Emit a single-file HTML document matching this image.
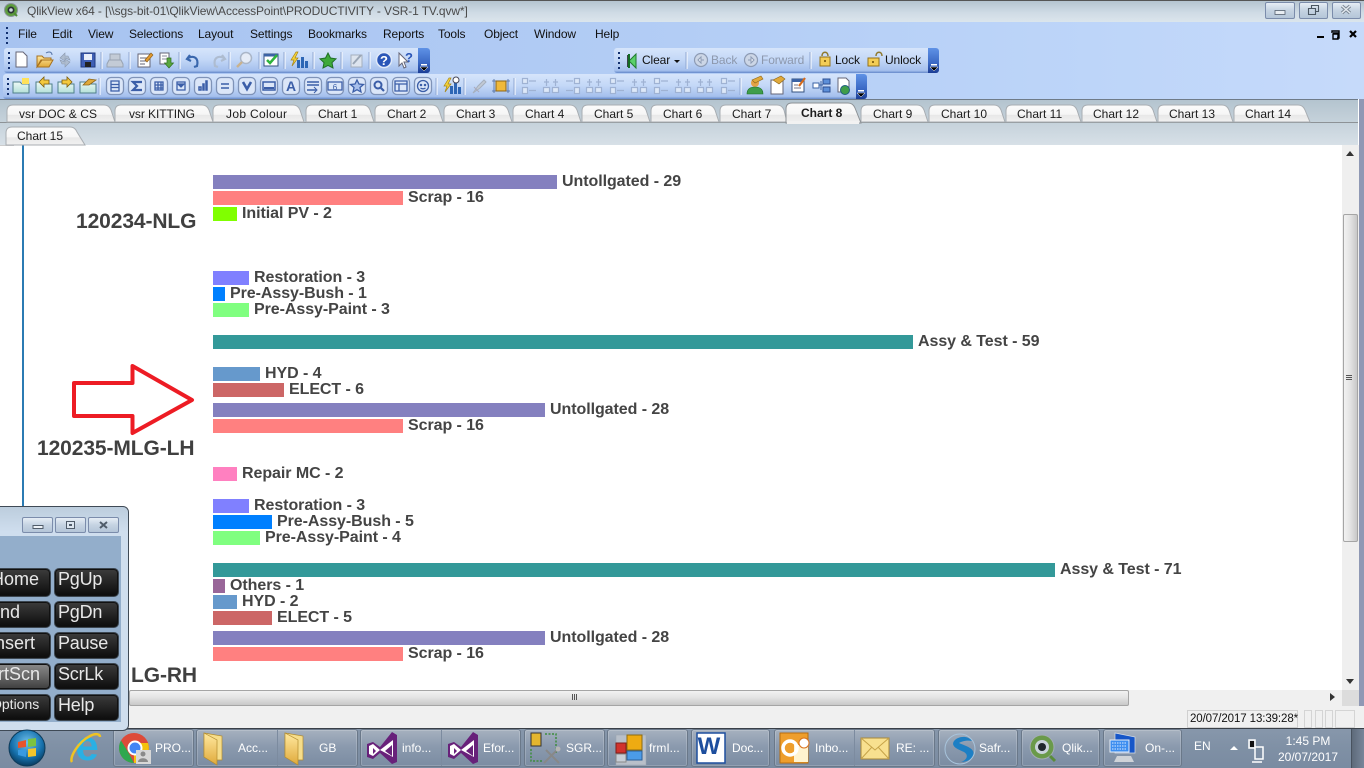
<!DOCTYPE html>
<html><head><meta charset="utf-8"><style>
html,body{margin:0;padding:0}
body{width:1364px;height:768px;position:relative;overflow:hidden;background:#fff;font-family:"Liberation Sans",sans-serif}
div,span.t{position:absolute;white-space:nowrap}
.m{top:27px;font-size:12px;color:#111;line-height:14px;letter-spacing:-.12px}
.tb{border-radius:3px;background:linear-gradient(#d6e5fb,#c4d8f7 45%,#a5c0ed 90%,#6488ca);}
.ch{background:linear-gradient(#5f92e6,#3a68c4 60%,#1b3d95);border-radius:0 3px 3px 0}
.b{height:14px;left:213px}
.l{font-size:16px;font-weight:bold;color:#444;line-height:16px;letter-spacing:-.06px}
.h{font-size:21px;font-weight:bold;color:#404040;line-height:24px;letter-spacing:-.1px}
.k{background:linear-gradient(#3c3c3c,#262626 45%,#0c0c0c);border:1px solid #3c4650;border-radius:5px;box-shadow:inset 0 0 0 1px #111;color:#e8e8e8;font-size:18px;line-height:20px;height:27px;box-sizing:border-box}
.r{left:54px;width:65px;padding-left:3px;letter-spacing:-.2px}
.c{left:-30px;width:81px}
.w{border:1px solid #7b8cab;border-radius:2px;background:linear-gradient(#e6edf5,#c5d3e2 50%,#b4c5d8);box-sizing:border-box}
.tk{top:729px;height:38px;box-sizing:border-box;border:1px solid #6a7889;border-radius:3px;background:linear-gradient(#a6b1bf,#8b9aae 45%,#7b8ca2);box-shadow:inset 0 0 0 1px rgba(255,255,255,.18)}
.tt{font-size:12px;color:#fff;line-height:14px;top:741px}
</style></head><body>
<!-- title -->
<div style="left:0;top:0;width:1364px;height:22px;background:linear-gradient(#b5c4d0 0,#cfdbe5 55%,#dbe5ec);border-top:1px solid #555;box-sizing:border-box"></div>
<div style="left:27px;top:4px;font-size:12px;color:#4a4a4a;line-height:14px;letter-spacing:-.12px">QlikView x64 - [\\sgs-bit-01\QlikView\AccessPoint\PRODUCTIVITY - VSR-1 TV.qvw*]</div>
<div class="w" style="left:1265px;top:2px;width:30px;height:17px"></div>
<div class="w" style="left:1299px;top:2px;width:29px;height:17px"></div>
<div class="w" style="left:1332px;top:2px;width:29px;height:17px"></div>
<!-- menu band -->
<div style="left:0;top:22px;width:1364px;height:77px;background:linear-gradient(90deg,#a7c3f0,#b3cdf5 50%,#bdd5f9 80%,#c6dafa)"></div>
<div class="m" style="left:18px">File</div><div class="m" style="left:52px">Edit</div><div class="m" style="left:88px">View</div><div class="m" style="left:129px">Selections</div><div class="m" style="left:198px">Layout</div><div class="m" style="left:250px">Settings</div><div class="m" style="left:308px">Bookmarks</div><div class="m" style="left:383px">Reports</div><div class="m" style="left:438px">Tools</div><div class="m" style="left:484px">Object</div><div class="m" style="left:534px">Window</div><div class="m" style="left:595px">Help</div>
<!-- toolbars -->
<div class="tb" style="left:4px;top:48px;width:426px;height:25px"></div>
<div class="ch" style="left:418px;top:48px;width:12px;height:25px"></div>
<div class="tb" style="left:3px;top:74px;width:864px;height:25px"></div>
<div class="ch" style="left:856px;top:74px;width:11px;height:25px"></div>
<div class="tb" style="left:614px;top:48px;width:325px;height:25px"></div>
<div class="ch" style="left:928px;top:48px;width:11px;height:25px"></div>
<div class="m" style="left:642px;top:53px;color:#111">Clear</div>
<div class="m" style="left:711px;top:53px;color:#8d98ad">Back</div>
<div class="m" style="left:761px;top:53px;color:#8d98ad">Forward</div>
<div class="m" style="left:835px;top:53px">Lock</div>
<div class="m" style="left:885px;top:53px">Unlock</div>
<!-- tab strip -->
<div style="left:0;top:99px;width:1358px;height:46px;background:linear-gradient(#b4c4cf,#d7e0e7);border-top:1px solid #6f7b88;box-sizing:border-box"></div>
<div style="left:0;top:122px;width:1358px;height:1px;background:#8d9296"></div>
<div style="left:1358px;top:99px;width:6px;height:46px;background:#fff"></div>
<!-- content -->
<div style="left:0;top:145px;width:1342px;height:545px;background:#fff"></div>
<div style="left:22px;top:145px;width:2px;height:362px;background:#2b7bb3"></div>
<div style="left:0;top:145px;width:14px;height:1px;background:#ccc"></div>
<div style="left:1359px;top:99px;width:5px;height:610px;background:#8f98b4"></div>
<!-- bars -->
<div class="b" style="top:175px;width:344px;background:#8480bf"></div><div class="l" style="left:562px;top:174px">Untollgated - 29</div>
<div class="b" style="top:191px;width:190px;background:#ff8080"></div><div class="l" style="left:408px;top:190px">Scrap - 16</div>
<div class="b" style="top:207px;width:24px;background:#80ff00"></div><div class="l" style="left:242px;top:206px">Initial PV - 2</div>
<div class="b" style="top:271px;width:36px;background:#8080ff"></div><div class="l" style="left:254px;top:270px">Restoration - 3</div>
<div class="b" style="top:287px;width:12px;background:#0080ff"></div><div class="l" style="left:230px;top:286px">Pre-Assy-Bush - 1</div>
<div class="b" style="top:303px;width:36px;background:#80ff80"></div><div class="l" style="left:254px;top:302px">Pre-Assy-Paint - 3</div>
<div class="b" style="top:335px;width:700px;background:#339999"></div><div class="l" style="left:918px;top:334px">Assy &amp; Test - 59</div>
<div class="b" style="top:367px;width:47px;background:#6699cc"></div><div class="l" style="left:265px;top:366px">HYD - 4</div>
<div class="b" style="top:383px;width:71px;background:#cc6666"></div><div class="l" style="left:289px;top:382px">ELECT - 6</div>
<div class="b" style="top:403px;width:332px;background:#8480bf"></div><div class="l" style="left:550px;top:402px">Untollgated - 28</div>
<div class="b" style="top:419px;width:190px;background:#ff8080"></div><div class="l" style="left:408px;top:418px">Scrap - 16</div>
<div class="b" style="top:467px;width:24px;background:#ff80c0"></div><div class="l" style="left:242px;top:466px">Repair MC - 2</div>
<div class="b" style="top:499px;width:36px;background:#8080ff"></div><div class="l" style="left:254px;top:498px">Restoration - 3</div>
<div class="b" style="top:515px;width:59px;background:#0080ff"></div><div class="l" style="left:277px;top:514px">Pre-Assy-Bush - 5</div>
<div class="b" style="top:531px;width:47px;background:#80ff80"></div><div class="l" style="left:265px;top:530px">Pre-Assy-Paint - 4</div>
<div class="b" style="top:563px;width:842px;background:#339999"></div><div class="l" style="left:1060px;top:562px">Assy &amp; Test - 71</div>
<div class="b" style="top:579px;width:12px;background:#996699"></div><div class="l" style="left:230px;top:578px">Others - 1</div>
<div class="b" style="top:595px;width:24px;background:#6699cc"></div><div class="l" style="left:242px;top:594px">HYD - 2</div>
<div class="b" style="top:611px;width:59px;background:#cc6666"></div><div class="l" style="left:277px;top:610px">ELECT - 5</div>
<div class="b" style="top:631px;width:332px;background:#8480bf"></div><div class="l" style="left:550px;top:630px">Untollgated - 28</div>
<div class="b" style="top:647px;width:190px;background:#ff8080"></div><div class="l" style="left:408px;top:646px">Scrap - 16</div>
<div class="h" style="left:76px;top:210px">120234-NLG</div>
<div class="h" style="left:37px;top:437px">120235-MLG-LH</div>
<div class="h" style="left:131px;top:664px">LG-RH</div>
<!-- scrollbars -->
<div style="left:1342px;top:145px;width:17px;height:561px;background:#efefef"></div>
<div style="left:1343px;top:214px;width:15px;height:328px;box-sizing:border-box;border:1px solid #a5a5a5;border-radius:2px;background:linear-gradient(90deg,#f2f2f2,#e4e4e4 45%,#c8c8c8)"></div>
<div style="left:129px;top:690px;width:1213px;height:16px;background:#f0f0f0"></div>
<div style="left:129px;top:690px;width:1000px;height:16px;box-sizing:border-box;border:1px solid #a5a5a5;border-radius:2px;background:linear-gradient(#f2f2f2,#e4e4e4 45%,#c8c8c8)"></div>
<div style="left:1342px;top:690px;width:17px;height:16px;background:#dcdcdc"></div>
<!-- status -->
<div style="left:0;top:706px;width:1364px;height:22px;background:#f0f0f0"></div>
<div style="left:1187px;top:710px;width:111px;height:18px;box-sizing:border-box;border:1px solid #d0d0d0;font-size:11.5px;line-height:17px;color:#111;padding-left:2px;letter-spacing:-.1px">20/07/2017 13:39:28*</div>
<div style="left:1304px;top:710px;width:8px;height:18px;border:1px solid #d4d4d4;box-sizing:border-box"></div>
<div style="left:1315px;top:710px;width:8px;height:18px;border:1px solid #d4d4d4;box-sizing:border-box"></div>
<div style="left:1325px;top:710px;width:8px;height:18px;border:1px solid #d4d4d4;box-sizing:border-box"></div>
<div style="left:1335px;top:710px;width:20px;height:18px;border:1px solid #d4d4d4;box-sizing:border-box"></div>
<!-- taskbar -->
<div style="left:0;top:728px;width:1364px;height:40px;background:linear-gradient(#8797ab,#7f90a5 50%,#7a8ba1);border-top:1px solid #3a4048;box-sizing:border-box"></div>
<div class="tk" style="left:113px;width:81px"></div>
<div class="tk" style="left:196px;width:162px"></div><div style="left:277px;top:730px;width:1px;height:36px;background:#7c8b9f"></div>
<div class="tk" style="left:360px;width:161px"></div><div style="left:441px;top:730px;width:1px;height:36px;background:#7c8b9f"></div>
<div class="tk" style="left:524px;width:81px"></div>
<div class="tk" style="left:607px;width:81px"></div>
<div class="tk" style="left:691px;width:79px"></div>
<div class="tk" style="left:774px;width:161px"></div><div style="left:854px;top:730px;width:1px;height:36px;background:#7c8b9f"></div>
<div class="tk" style="left:938px;width:80px"></div>
<div class="tk" style="left:1021px;width:79px"></div>
<div class="tk" style="left:1103px;width:79px"></div>
<div style="left:1351px;top:729px;width:13px;height:39px;background:linear-gradient(90deg,#5e6a7a,#77869a);border-left:1px solid #48525f;box-sizing:border-box"></div>
<div class="tt" style="left:155px">PRO...</div><div class="tt" style="left:238px">Acc...</div><div class="tt" style="left:319px">GB</div><div class="tt" style="left:402px">info...</div><div class="tt" style="left:483px">Efor...</div><div class="tt" style="left:566px">SGR...</div><div class="tt" style="left:649px">frmI...</div><div class="tt" style="left:732px">Doc...</div><div class="tt" style="left:815px">Inbo...</div><div class="tt" style="left:896px">RE: ...</div><div class="tt" style="left:979px">Safr...</div><div class="tt" style="left:1062px">Qlik...</div><div class="tt" style="left:1145px">On-...</div>
<div class="tt" style="left:1194px;top:739px">EN</div>
<div class="tt" style="left:1268px;width:80px;text-align:center;top:734px">1:45 PM</div>
<div class="tt" style="left:1268px;width:80px;text-align:center;top:750px">20/07/2017</div>
<!-- on-screen keyboard window -->
<div style="left:-6px;top:506px;width:135px;height:225px;box-sizing:border-box;border:1px solid #3f4a56;border-radius:6px;background:linear-gradient(#bccddd,#cfdeee 25px)"></div>
<div style="left:0;top:536px;width:121px;height:186px;background:#93aecb"></div>
<div class="w" style="left:22px;top:517px;width:31px;height:16px"></div>
<div class="w" style="left:55px;top:517px;width:31px;height:16px"></div>
<div class="w" style="left:88px;top:517px;width:31px;height:16px"></div>
<div class="k c" style="top:568px;height:29px;padding-left:20px;line-height:21px">Home</div>
<div class="k c" style="top:601px;padding-left:17px">End</div>
<div class="k c" style="top:632px;padding-left:19px">Insert</div>
<div class="k c" style="top:663px;padding-left:15px;background:linear-gradient(#8a8a8a,#666 50%,#3e3e3e)">PrtScn</div>
<div class="k c" style="top:694px;padding-left:20px;font-size:14px;line-height:18px">Options</div>
<div class="k r" style="top:568px;height:29px;line-height:21px">PgUp</div>
<div class="k r" style="top:601px">PgDn</div>
<div class="k r" style="top:632px">Pause</div>
<div class="k r" style="top:663px">ScrLk</div>
<div class="k r" style="top:694px">Help</div>

<svg width="1364" height="768" viewBox="0 0 1364 768" style="position:absolute;left:0;top:0" xmlns="http://www.w3.org/2000/svg">
<defs>
<linearGradient id="tg" x1="0" y1="0" x2="0" y2="1"><stop offset="0" stop-color="#fbfbfb"/><stop offset=".55" stop-color="#f6f6f6"/><stop offset=".6" stop-color="#e8e8e8"/><stop offset="1" stop-color="#f1f1f1"/></linearGradient>
<linearGradient id="gy" x1="0" y1="0" x2="0" y2="1"><stop offset="0" stop-color="#ffe9a0"/><stop offset="1" stop-color="#e0a93a"/></linearGradient>
<linearGradient id="tl" x1="0" y1="0" x2="0" y2="1"><stop offset="0" stop-color="#eef9f6"/><stop offset="1" stop-color="#b4e0d8"/></linearGradient>
<radialGradient id="orb" cx=".5" cy=".35" r=".7"><stop offset="0" stop-color="#6fc0ea"/><stop offset=".6" stop-color="#1671ad"/><stop offset="1" stop-color="#06304f"/></radialGradient>
<g id="btn"><rect x="-8.5" y="-8.5" width="17" height="17" rx="4.5" fill="#dbe6f8" stroke="#7f93b8"/></g>
<g id="dots"><rect x="0" y="0" width="2" height="2" fill="#12306f"/><rect x="0" y="5" width="2" height="2" fill="#12306f"/><rect x="0" y="10" width="2" height="2" fill="#12306f"/><rect x="0" y="15" width="2" height="2" fill="#12306f"/></g>
<g id="chev"><rect x="-3" y="0" width="6" height="1.5" fill="#fff"/><path d="M-4 3H4L0 7Z" fill="#000" stroke="#fff" stroke-width=".5"/></g>
<g id="tabf"><path d="M-8 9V-2H-1L1 0H8V9Z" fill="url(#tl)" stroke="#4f7f8a"/></g>
<g id="al" fill="none" stroke="#9fb2d3" stroke-width="1.2"><rect x="-6.5" y="-7.5" width="5" height="5" fill="#dde8f8"/><rect x="-6.5" y="1.500" width="5" height="6" fill="#dde8f8"/><path d="M0-5H7M0 4.500H7"/></g>
<g id="av" fill="none" stroke="#9fb2d3" stroke-width="1.2"><rect x="-7.500" y="1.500" width="6" height="5" fill="#dde8f8"/><rect x="1.500" y="1.500" width="6" height="5" fill="#dde8f8"/><path d="M-4.500-7V0M4.500-7V0M-7-4H-2M2-4H7"/></g>
</defs>
<!-- menu grip -->
<use href="#dots" x="6" y="27"/>
<!-- window controls -->
<rect x="1275" y="10.500" width="10" height="4" fill="#e8edf2" stroke="#54606e" stroke-width=".8"/>
<path d="M1311.500 8.500v-3h7v6h-3M1308.500 8.500h7v6h-7Z" fill="none" stroke="#4a5662" stroke-width="1.100"/>
<path d="M1342 6l8 7M1350 6l-8 7" stroke="#7c8895" stroke-width="3.400"/><path d="M1342 6l8 7M1350 6l-8 7" stroke="#e4eaf0" stroke-width="1.400"/>
<rect x="1317" y="36" width="7" height="2" fill="#000"/>
<path d="M1333 33h6v5h-2M1332 33v-2h7v2M1333 34h5v5h-5Z" fill="none" stroke="#000" stroke-width="1.400"/>
<path d="M1350 31l6 6M1356 31l-6 6" stroke="#000" stroke-width="2.200"/>
<!-- toolbar grips -->
<use href="#dots" x="8" y="52"/><use href="#dots" x="7" y="78"/><use href="#dots" x="618" y="52"/>
<use href="#chev" x="424" y="64"/><use href="#chev" x="861" y="90"/><use href="#chev" x="934" y="64"/>
<!-- separators -->
<path d="M102 52v17M130 52v17M180 52v17M230 52v17M260 52v17M285 52v17M314 52v17M342 52v17M370 52v17M100 78v17M437 78v17M465 78v17M515 78v17M741 78v17M687 52v17M811 52v17" stroke="#f4f8ff" stroke-width="1.400" opacity=".9"/>
<path d="M101 52v17M129 52v17M179 52v17M229 52v17M259 52v17M284 52v17M313 52v17M341 52v17M369 52v17M99 78v17M436 78v17M464 78v17M514 78v17M740 78v17M686 52v17M810 52v17" stroke="#8fa7d3" stroke-width="1"/>
<!-- toolbar 1 -->
<path d="M16 52h7l4 4v11H16Z" fill="#fff" stroke="#667"/>
<path d="M37 56h5l2 2h7v2h-9l-5 7Zm0 11 4-7h12l-4 7Z" fill="url(#gy)" stroke="#a6701e"/><path d="M46 53c3-2 6-1 6 2" fill="none" stroke="#5574a8"/>
<path d="M60 58l5-5v3h3l2 4-5-2v3ZM70 62l-5 5v-3h-3l-2-4 5 2v-3Z" fill="#aebccf" stroke="#8b99ae" stroke-width=".6"/>
<rect x="81" y="53" width="14" height="14" fill="#3f5fb4" stroke="#203a80"/><rect x="84" y="54" width="8" height="6" fill="#e8eefa"/><rect x="85" y="62" width="6" height="5" fill="#222"/>
<path d="M109 60h12l2 4v3h-16v-3ZM110 60v-6h10v6" fill="#c3cbd6" stroke="#98a3b2"/>
<rect x="138" y="54" width="12" height="13" fill="#fff" stroke="#667"/><path d="M140 58h7M140 61h7M140 64h5" stroke="#667"/><path d="M145 60l6-7 2 2-6 7Z" fill="#e39a2f" stroke="#8b5c15" stroke-width=".6"/>
<path d="M160 53h9v11h-9Z" fill="#fff" stroke="#667"/><path d="M162 56h5M162 59h5" stroke="#889"/><path d="M167 58h4v5h2.500l-4.500 5-4.500-5h2.500Z" fill="#5aa83f" stroke="#2f6e1f" stroke-width=".7"/>
<path d="M190 55l-3 4 4 2M188 58c6-3 11 0 9 8l-3 1" fill="none" stroke="#3a67ad" stroke-width="2.200"/>
<path d="M222 55l3 4-4 2M224 58c-6-3-11 0-9 8l3 1" fill="none" stroke="#aebcd0" stroke-width="2.200"/>
<circle cx="246" cy="58" r="5.500" fill="#e6ecf6" stroke="#aab6c8" stroke-width="1.500"/><path d="M242 62l-5 5" stroke="#c9b28f" stroke-width="2.500"/>
<rect x="264" y="54" width="14" height="12" fill="#fff" stroke="#34527f"/><rect x="264" y="54" width="14" height="2.500" fill="#3b63a5"/><path d="M267 60l3 3 7-8" fill="none" stroke="#2fb33c" stroke-width="2.500"/>
<path d="M296 52l-5 8h3l-2 6 6-8h-3l3-6Z" fill="#f5d33d" stroke="#a78514" stroke-width=".7"/><rect x="297" y="60" width="3" height="8" fill="#2d66b5"/><rect x="301" y="57" width="3" height="11" fill="#2d66b5"/><rect x="305" y="61" width="3" height="7" fill="#2d66b5"/>
<path d="M328 53l2.500 5 5.500.8-4 3.900 1 5.300-5-2.600-5 2.600 1-5.300-4-3.900 5.500-.8Z" fill="#3ea93a" stroke="#1f6f26"/>
<rect x="351" y="55" width="11" height="12" fill="#dde4ee" stroke="#a5afbd"/><path d="M353 64l8-9" stroke="#9aa6b6" stroke-width="2"/>
<circle cx="384" cy="60" r="7.500" fill="#2a56b8" stroke="#dfe8f8" stroke-width="1.500"/><text x="384" y="65" font-family="Liberation Sans" font-size="13" font-weight="bold" fill="#fff" text-anchor="middle">?</text>
<path d="M399 53v13l3-3 2 5 2-1-2-5h4Z" fill="#fff" stroke="#667"/><text x="409" y="62" font-family="Liberation Sans" font-size="13" font-weight="bold" fill="#2a56b8" text-anchor="middle">?</text>
<!-- toolbar 2 -->
<g transform="translate(21 84)"><use href="#tabf"/><rect x="1" y="-6" width="7" height="6" fill="#ffe15a"/></g>
<g transform="translate(44 84)"><use href="#tabf"/><path d="M-5-2l5-5v3h5v4H0v3Z" fill="#f4c93e" stroke="#7d5d0c" stroke-width=".8"/></g>
<g transform="translate(66 84)"><use href="#tabf"/><path d="M6-2L1-7v3h-5v4H1v3Z" fill="#f4c93e" stroke="#7d5d0c" stroke-width=".8"/></g>
<g transform="translate(88 84)"><use href="#tabf"/><path d="M-5 1l6-6 7 1-7 5Z" fill="#e0a93a" stroke="#8d6518" stroke-width=".8"/></g>
<g fill="none" stroke="#3b5ea8" stroke-width="1.300">
<use href="#btn" x="115" y="86"/><use href="#btn" x="137" y="86"/><use href="#btn" x="159" y="86"/><use href="#btn" x="181" y="86"/><use href="#btn" x="203" y="86"/><use href="#btn" x="225" y="86"/><use href="#btn" x="247" y="86"/><use href="#btn" x="269" y="86"/><use href="#btn" x="291" y="86"/><use href="#btn" x="313" y="86"/><use href="#btn" x="335" y="86"/><use href="#btn" x="357" y="86"/><use href="#btn" x="379" y="86"/><use href="#btn" x="401" y="86"/><use href="#btn" x="423" y="86"/>
<path d="M111 81h8v10h-8ZM111 84.500h8M111 87.500h8"/>
<path d="M142 82h-9l4 4-4 4h9" stroke-width="2.200"/>
<path d="M155 82h8v8h-8ZM155 85h8M155 88h8M158 82v8M161 82v8"/>
<path d="M177 82h8v8h-8Z"/><path d="M178 84h6l-3 3Z" fill="#3b5ea8"/>
<path d="M199 90h2v-3h-2ZM203 90h1v-6h-1ZM206 90h1v-9h-1Z" stroke-width="1.500"/>
<path d="M221 84h8M221 88h8" stroke-width="1.600"/>
<path d="M243 82l4 7 4-7" stroke-width="2.600"/>
<path d="M263 82h12v8h-12Z" stroke-width="1.500"/><path d="M264 88h10" stroke-width="2"/>
<text x="291" y="91" font-family="Liberation Sans" font-size="14" font-weight="bold" fill="#3b5ea8" stroke="none" text-anchor="middle">A</text>
<path d="M307 82h12M307 85h12M307 90h9" stroke-width="1.500"/><path d="M314 87l3 3-3 3" stroke-width="1"/>
<path d="M328 82h14v8h-14Z"/><text x="335" y="90" font-family="Liberation Sans" font-size="8" fill="#3b5ea8" stroke="none" text-anchor="middle">6</text>
<path d="M357 80l2 4 4.500.5-3.500 3 1 4.500-4-2.300-4 2.300 1-4.500-3.500-3 4.500-.5Z" fill="#a8c0ec"/>
<circle cx="378" cy="85" r="3.500" stroke-width="2"/><path d="M381 88l3 3" stroke-width="2.200"/>
<path d="M395 81h12v10h-12ZM395 84h12M399 84v7"/>
<circle cx="423" cy="86" r="5.500"/><circle cx="421" cy="85" r=".6"/><circle cx="425" cy="85" r=".6"/><path d="M420.500 88c1.500 1 3.500 1 5 0"/>
</g>
<g transform="translate(0 26)"><path d="M449 52l-5 8h3l-2 6 6-8h-3l3-6Z" fill="#f5d33d" stroke="#a78514" stroke-width=".7"/><rect x="450" y="60" width="3" height="8" fill="#2d66b5"/><rect x="454" y="57" width="3" height="11" fill="#2d66b5"/><rect x="458" y="61" width="3" height="7" fill="#2d66b5"/><circle cx="456" cy="54" r="3" fill="#fff" stroke="#445"/></g>
<path d="M473 93l5-7 6-6 2 2-6 6Z" fill="#c2cad5" stroke="#a5afbd"/><path d="M474 87l5 5" stroke="#aab"/>
<path d="M494 79v14M508 79v14M492 81h18M492 91h18" stroke="#4c6aa0" stroke-width=".8"/><rect x="496" y="81" width="10" height="10" fill="#f0b93a" stroke="#8d6518"/>
<use href="#al" x="529" y="86"/><use href="#av" x="551" y="86"/><use href="#al" x="573" y="86" transform="translate(1146 0) scale(-1 1)"/><use href="#av" x="594" y="86"/><use href="#al" x="617" y="86"/><use href="#av" x="639" y="86"/><use href="#al" x="661" y="86"/><use href="#av" x="683" y="86"/><use href="#av" x="705" y="86"/><use href="#al" x="728" y="86"/>
<circle cx="755" cy="83" r="4" fill="#e3a247"/><path d="M747 94c0-6 4-7 8-7s8 1 8 7Z" fill="#3f9d4a" stroke="#1f6f26" stroke-width=".6"/><path d="M752 80l9-4 2 3-8 4Z" fill="#e0a93a" stroke="#8d6518" stroke-width=".6"/>
<path d="M771 80h12v14h-12Z" fill="#fff" stroke="#667"/><path d="M773 80l8-4 4 3-6 5Z" fill="#e0a93a" stroke="#8d6518" stroke-width=".6"/>
<rect x="792" y="79" width="12" height="13" fill="#fff" stroke="#34527f"/><rect x="792" y="79" width="12" height="3" fill="#3b63a5"/><path d="M799 86l6-8" stroke="#d46a1c" stroke-width="2.200"/><path d="M794 85h4M794 88h7" stroke="#778"/>
<rect x="813" y="83" width="6" height="5" fill="#fff" stroke="#3b63a5"/><rect x="823" y="79" width="7" height="5" fill="#5c8fd9" stroke="#2d4f92"/><rect x="823" y="87" width="7" height="5" fill="#5c8fd9" stroke="#2d4f92"/><path d="M819 85h4M821 81v9" stroke="#3b63a5"/>
<path d="M838 78h8l3 3v11h-11Z" fill="#fff" stroke="#667"/><circle cx="845" cy="90" r="4.500" fill="#3f9d4a" stroke="#1e5f80"/>
<!-- clear toolbar -->
<path d="M628 55v12" stroke="#111" stroke-width="1.500"/><path d="M636 54l-7 7 7 7Z" fill="#5ad06a" stroke="#1f7a2e"/><path d="M629 54v14" stroke="#146c24" stroke-width="2"/>
<path d="M674 60h6l-3 3Z" fill="#111"/>
<g fill="#ccd6e6" stroke="#8d9bb4" stroke-width="1.200"><circle cx="701" cy="60" r="6.500"/><circle cx="751" cy="60" r="6.500"/></g>
<path d="M704 60h-3v-3l-3 3 3 3v-3M748 60h3v-3l3 3-3 3v-3" stroke="#8d9bb4" fill="#eef2f8"/>
<path d="M822 56c0-5 6-5 6 0" fill="none" stroke="#8f7a30" stroke-width="1.500"/><rect x="820" y="57" width="10" height="9" fill="#f3cd56" stroke="#94721b"/><circle cx="825" cy="61" r="1" fill="#6b4c05"/>
<path d="M876 56c0-5 6-5 6 0" fill="none" stroke="#8f7a30" stroke-width="1.500"/><rect x="868" y="58" width="11" height="8" fill="#f3cd56" stroke="#94721b"/><circle cx="873" cy="62" r="1" fill="#6b4c05"/>
<!-- tabs -->
<g fill="url(#tg)" stroke="#a8adb2">
<path d="M7 122V111Q7 105 13 105H104Q109 105 111 110L115 122Z"/>
<path d="M115 122V111Q115 105 121 105H202Q207 105 209 110L213 122Z"/>
<path d="M213 122V111Q213 105 219 105H293Q298 105 300 110L304 122Z"/>
<path d="M306 122V111Q306 105 312 105H363Q368 105 370 110L374 122Z"/>
<path d="M375 122V111Q375 105 381 105H432Q437 105 439 110L443 122Z"/>
<path d="M444 122V111Q444 105 450 105H501Q506 105 508 110L512 122Z"/>
<path d="M513 122V111Q513 105 519 105H570Q575 105 577 110L581 122Z"/>
<path d="M582 122V111Q582 105 588 105H639Q644 105 646 110L650 122Z"/>
<path d="M651 122V111Q651 105 657 105H708Q713 105 715 110L719 122Z"/>
<path d="M720 122V111Q720 105 726 105H777Q782 105 784 110L787 122Z"/>
<path d="M861 122V111Q861 105 867 105H917Q922 105 924 110L928 122Z"/>
<path d="M929 122V111Q929 105 935 105H994Q999 105 1001 110L1005 122Z"/>
<path d="M1006 122V111Q1006 105 1012 105H1070Q1075 105 1077 110L1081 122Z"/>
<path d="M1082 122V111Q1082 105 1088 105H1146Q1151 105 1153 110L1157 122Z"/>
<path d="M1158 122V111Q1158 105 1164 105H1222Q1227 105 1229 110L1233 122Z"/>
<path d="M1234 122V111Q1234 105 1240 105H1298Q1303 105 1305 110L1310 122Z"/>
<path d="M786 123V109Q786 103 792 103H848Q853 103 855 108L861 123Z" stroke="#8d9296"/>
<path d="M6 145V133Q6 127 12 127H70Q75 127 77 132L85 145Z"/>
</g>
<rect x="787" y="121" width="72" height="3" fill="#f2f2f2"/>
<g font-family="Liberation Sans" font-size="12" fill="#1c1c1c">
<text x="19" y="118" textLength="78">vsr DOC &amp; CS</text><text x="129" y="118" textLength="66">vsr KITTING</text><text x="226" y="118" textLength="61">Job Colour</text><text x="318" y="118">Chart 1</text><text x="387" y="118">Chart 2</text><text x="456" y="118">Chart 3</text><text x="525" y="118">Chart 4</text><text x="594" y="118">Chart 5</text><text x="663" y="118">Chart 6</text><text x="732" y="118">Chart 7</text><text x="801" y="117" font-weight="bold">Chart 8</text><text x="873" y="118">Chart 9</text><text x="941" y="118">Chart 10</text><text x="1017" y="118">Chart 11</text><text x="1093" y="118">Chart 12</text><text x="1169" y="118">Chart 13</text><text x="1245" y="118">Chart 14</text><text x="17" y="140">Chart 15</text>
</g>
<!-- arrow -->
<path d="M74 383H132.500V366L192 400L132.500 433V416H74Z" fill="#fff" stroke="#ed1c24" stroke-width="4" stroke-linejoin="round"/>
<!-- scroll arrows -->
<path d="M1350 151l4 5h-8Z" fill="#333"/><path d="M1350 684l4-5h-8Z" fill="#333"/><path d="M1335 697l-5-4v8Z" fill="#333"/>
<path d="M1346 375.500h6M1346 377.500h6M1346 379.500h6" stroke="#555"/><path d="M572.500 694v6M574.500 694v6M576.500 694v6" stroke="#555"/>
<!-- Qlik title icon -->
<circle cx="11" cy="10" r="6.500" fill="#5d9c3e" stroke="#8a949c"/><circle cx="11" cy="10" r="3.500" fill="#2b3238"/><circle cx="11" cy="10" r="1.800" fill="#cfd8de"/><path d="M14 13l3 3" stroke="#4e8a33" stroke-width="2"/>
<!-- keyboard window icons -->
<rect x="33" y="525.500" width="10" height="3" fill="#eef3f8" stroke="#505c6a"/><rect x="66.500" y="521.500" width="8" height="7" fill="#dce6f0" stroke="#505c6a"/><rect x="69" y="524" width="3" height="2" fill="#505c6a"/><path d="M100 522l7 6M107 522l-7 6" stroke="#505c6a" stroke-width="2"/>
<!-- start orb -->
<circle cx="27" cy="748" r="18" fill="url(#orb)" stroke="#0d3b5a"/><path d="M18 742l8-2v7l-8 1Z" fill="#e8542b"/><path d="M28 739l8-1v8l-8 1Z" fill="#7dc23f"/><path d="M18 750l8-1v8l-8-2Z" fill="#3a9ae0"/><path d="M28 749l8-1v8l-8 1Z" fill="#f4c52a"/>
<!-- IE -->
<text x="87" y="760" font-family="Liberation Sans" font-size="42" font-weight="bold" fill="#2ab0e4" text-anchor="middle">e</text>
<path d="M72 762c-3-4 6-20 18-26 6-3 10-2 10 1" fill="none" stroke="#f0c323" stroke-width="2.500"/>
<!-- Chrome -->
<circle cx="134" cy="748" r="15" fill="#dd4b39"/><path d="M134 763a15 15 0 0 1-13-22.500l8 13Z" fill="#2fa84f"/><path d="M134 763a15 15 0 0 0 14-20h-14Z" fill="#f4c20d"/><circle cx="135" cy="748" r="6.500" fill="#4285f4" stroke="#fff" stroke-width="2"/><rect x="136" y="750" width="15" height="14" fill="#d7d7d7"/><circle cx="143" cy="754" r="2.500" fill="#8a8a8a"/><path d="M138 762c0-5 10-5 10 0Z" fill="#8a8a8a"/>
<!-- folders -->
<path d="M204 733l18 3v24h-7l-11-3Z" fill="#f6dd8a" stroke="#b28c30" stroke-width=".7"/><path d="M204 733l13 7v25l-13-8Z" fill="url(#gy)" stroke="#b28c30" stroke-width=".7"/>
<g transform="translate(81 0)"><path d="M204 733l18 3v24h-7l-11-3Z" fill="#f6dd8a" stroke="#b28c30" stroke-width=".7"/><path d="M204 733l13 7v25l-13-8Z" fill="url(#gy)" stroke="#b28c30" stroke-width=".7"/></g>
<!-- VS -->
<path d="M367 744l6-2 7 5 12-15 5 3v27l-5 2-12-11-7 6-6-2Z" fill="#68217a"/><path d="M369 746l4-2 7 6 13-10v17l-13-7-7 6-4-2Z" fill="#fff"/><path d="M373 748v6l3-3ZM392 745l-7 6 7 5Z" fill="#68217a"/>
<g transform="translate(81 0)"><path d="M367 744l6-2 7 5 12-15 5 3v27l-5 2-12-11-7 6-6-2Z" fill="#68217a"/><path d="M369 746l4-2 7 6 13-10v17l-13-7-7 6-4-2Z" fill="#fff"/><path d="M373 748v6l3-3ZM392 745l-7 6 7 5Z" fill="#68217a"/></g>
<!-- SGR -->
<rect x="531" y="733" width="10" height="13" fill="#e4b62e" stroke="#333"/><path d="M545 734h11v20M531 749v12h12" fill="none" stroke="#3e8c3e" stroke-width="1.500" stroke-dasharray="2 1.500"/><path d="M544 763l14-14M559 763l-13-13" stroke="#888" stroke-width="2"/><circle cx="558" cy="749" r="2.500" fill="#b5b5b5"/>
<!-- frmI -->
<rect x="616" y="735" width="30" height="30" fill="#b8bfc9" stroke="#9aa3ae" stroke-width=".5"/><rect x="627" y="735" width="15" height="15" fill="#eeab12" stroke="#8c6b11"/><rect x="616" y="743" width="10" height="10" fill="#d1322c" stroke="#7f1d1a"/><rect x="627" y="751" width="15" height="9" fill="#4b9be8" stroke="#2c5f96"/><rect x="616" y="754" width="10" height="8" fill="#c7ced6" stroke="#888"/>
<!-- word -->
<rect x="697" y="733" width="28" height="30" fill="#fff" stroke="#1d4e9e" stroke-width="1.500"/><text x="709" y="754" font-family="Liberation Sans" font-size="24" font-weight="bold" fill="#1d4e9e" text-anchor="middle">W</text>
<!-- outlook -->
<rect x="780" y="733" width="28" height="30" fill="#ee9e2c" stroke="#b96d0e"/><rect x="794" y="745" width="14" height="17" fill="#fff3cf"/><circle cx="790" cy="748" r="7" fill="none" stroke="#fff" stroke-width="3.500"/><circle cx="804" cy="743" r="5" fill="#fff" stroke="#d9711a"/>
<!-- envelope -->
<rect x="861" y="738" width="28" height="21" fill="#f8e08f" stroke="#a7873a"/><path d="M861 738l14 12 14-12M861 759l11-12M889 759l-11-12" fill="none" stroke="#c6a348"/>
<!-- safran -->
<path d="M972 741c-4-6-14-5-18 0-4 6 6 9 10 11 5 3 3 8-3 10 9 0 14-6 12-11-2-4-10-6-14-8 3-2 9-3 13-2Z" fill="#1d7fc4"/><ellipse cx="960" cy="749" rx="15" ry="15" fill="none" stroke="#a8c4dc" stroke-width="1"/>
<!-- qlik -->
<circle cx="1042" cy="747" r="12" fill="#6a9a4a" stroke="#a3adb5"/><circle cx="1042" cy="747" r="7" fill="#c9d3da"/><circle cx="1042" cy="747" r="4" fill="#1f262c"/><path d="M1050 756l5 5" stroke="#5a8c3a" stroke-width="3"/>
<!-- on-screen keyboard -->
<path d="M1115 733l20 4v16h-20Z" fill="#1656c8" stroke="#d7dee8" stroke-width=".7"/><rect x="1110" y="740" width="19" height="12" fill="#3d8ef0" stroke="#e8eef6"/><path d="M1112 743h15M1112 746h15M1112 749h15" stroke="#dcecff" stroke-dasharray="1.500 1"/><path d="M1117 756h14l3 6h-20Z" fill="#cfd3d8"/>
<!-- tray -->
<path d="M1230 750l4-4 4 4Z" fill="#fff"/>
<path d="M1249 740h6v8h-6ZM1255 747h8v12h-8ZM1252 762h10" fill="none" stroke="#fff" stroke-width="1.500"/><rect x="1250" y="741" width="4" height="6" fill="#111"/>
</svg>
</body></html>
